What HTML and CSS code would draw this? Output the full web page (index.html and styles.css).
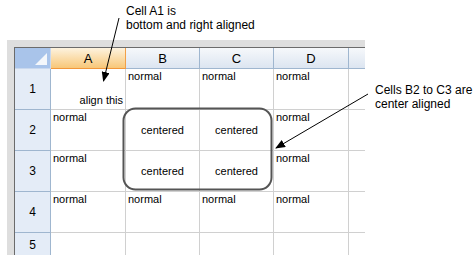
FILE: index.html
```html
<!DOCTYPE html>
<html lang="en">
<head>
    <meta charset="UTF-8">
    <title>Cell alignment</title>
    <link rel="stylesheet" href="styles.css">
</head>
<body>
    <div class="note note-a1">Cell A1 is<br>bottom and right aligned</div>
    <div class="note note-b2">Cells B2 to C3 are<br>center aligned</div>

    <div class="frame">
        <div class="sheet">
            <div class="corner"><span class="tri"></span></div>
            <div class="colhead active">A</div>
            <div class="colhead">B</div>
            <div class="colhead">C</div>
            <div class="colhead">D</div>
            <div class="colhead"></div>

            <div class="rowhead">1</div>
            <div class="cell bottom-right">align this</div>
            <div class="cell">normal</div>
            <div class="cell">normal</div>
            <div class="cell">normal</div>
            <div class="cell"></div>

            <div class="rowhead">2</div>
            <div class="cell">normal</div>
            <div class="cell centered">centered</div>
            <div class="cell centered">centered</div>
            <div class="cell">normal</div>
            <div class="cell"></div>

            <div class="rowhead">3</div>
            <div class="cell">normal</div>
            <div class="cell centered">centered</div>
            <div class="cell centered">centered</div>
            <div class="cell">normal</div>
            <div class="cell"></div>

            <div class="rowhead">4</div>
            <div class="cell">normal</div>
            <div class="cell">normal</div>
            <div class="cell">normal</div>
            <div class="cell">normal</div>
            <div class="cell"></div>

            <div class="rowhead">5</div>
            <div class="cell"></div>
            <div class="cell"></div>
            <div class="cell"></div>
            <div class="cell"></div>
            <div class="cell"></div>
        </div>
    </div>

    <!-- callouts drawn over the sheet -->
    <svg class="overlay" width="475" height="255" viewBox="0 0 475 255">
        <defs>
            <marker id="head" markerWidth="10" markerHeight="8" refX="9" refY="4" orient="auto" markerUnits="userSpaceOnUse">
                <path d="M0,0 L10,4 L0,8 Z" fill="#000"/>
            </marker>
        </defs>
        <rect x="123.5" y="108.5" width="148" height="81" rx="12" ry="12" fill="none" stroke="#555" stroke-width="2"/>
        <line x1="119" y1="18" x2="103.5" y2="81" stroke="#000" stroke-width="1" marker-end="url(#head)"/>
        <line x1="368" y1="94" x2="276" y2="148" stroke="#000" stroke-width="1" marker-end="url(#head)"/>
    </svg>
</body>
</html>
```

FILE: styles.css
```css
* {
    margin: 0;
    padding: 0;
    box-sizing: border-box;
}

body {
    background: #fff;
    width: 475px;
    height: 255px;
    overflow: hidden;
    position: relative;
    font-family: "Liberation Sans", Arial, sans-serif;
    color: #000;
}

.note {
    position: absolute;
    font-size: 12px;
    line-height: 14px;
}

.note-a1 {
    left: 126px;
    top: 4px;
}

.note-b2 {
    left: 375px;
    top: 83px;
}

.frame {
    margin: 40px 0 0 7px;
    width: 358px;
    background: #dedede;
    padding: 7px 0 0 7px;
    height: 215px;
}

.sheet {
    display: grid;
    grid-template-columns: 36px 75px 74px 74px 75px 17px;
    grid-template-rows: 21px 41px 41px 41px 41px 24px;
    border-top: 1px solid #6b6b6b;
    border-left: 1px solid #6b6b6b;
    background: #fff;
    height: 209px;
    overflow: hidden;
}

.corner {
    background: #a9c4ea;
    border-right: 1px solid #c9d8ee;
    border-bottom: 1px solid #c9d8ee;
    position: relative;
}

.tri {
    position: absolute;
    right: 3px;
    bottom: 3px;
    width: 0;
    height: 0;
    border-left: 12px solid transparent;
    border-bottom: 12px solid #f4f7fb;
}

.colhead {
    background: linear-gradient(to bottom, #f6f8fb, #dce5f1);
    border-right: 1px solid #9fb6cf;
    border-bottom: 1px solid #9fb6cf;
    font-size: 13px;
    display: flex;
    align-items: center;
    justify-content: center;
}

.colhead.active {
    background: linear-gradient(to bottom, #fdf3df, #f8c778);
    border-right: 1px solid #f2a048;
    border-bottom: 1px solid #f2973a;
}

.rowhead {
    background: #e4ecf7;
    border-right: 1px solid #9fb6cf;
    border-bottom: 1px solid #9fb6cf;
    font-size: 12px;
    display: flex;
    align-items: center;
    justify-content: center;
}

.cell {
    border-right: 1px solid #d0d0d0;
    border-bottom: 1px solid #d0d0d0;
    font-size: 11px;
    line-height: 13px;
    padding: 1px 2px;
    white-space: nowrap;
    display: flex;
}

.cell.bottom-right {
    align-items: flex-end;
    justify-content: flex-end;
    padding-bottom: 2px;
}

.cell.centered {
    align-items: center;
    justify-content: center;
}

.overlay {
    position: absolute;
    left: 0;
    top: 0;
    pointer-events: none;
}
```
